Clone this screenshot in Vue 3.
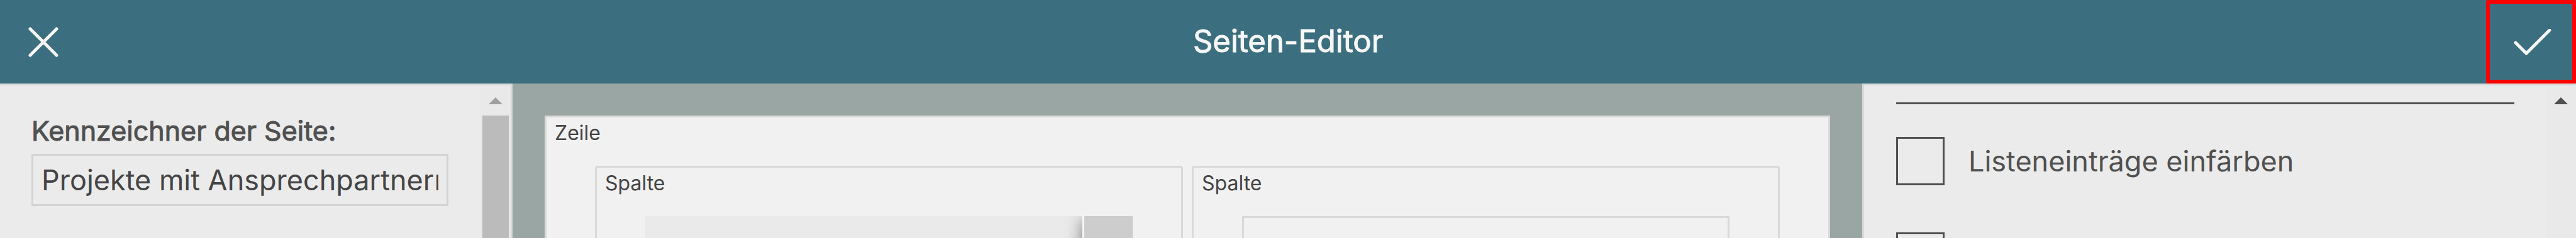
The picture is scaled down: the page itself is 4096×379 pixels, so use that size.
<script setup>
import { ref } from 'vue'

const pageName = ref('Projekte mit Ansprechpartnern')
const colorEntries = ref(false)
const nextOption = ref(false)
</script>

<template>
  <div class="editor">
    <header class="bar">
      <button class="close" type="button" aria-label="Schließen">
        <svg class="icon" viewBox="0 0 48 48" aria-hidden="true">
          <path d="M3 3L45 45M45 3L3 45" />
        </svg>
      </button>
      <h1 class="title">Seiten-Editor</h1>
      <button class="confirm" type="button" aria-label="Übernehmen">
        <svg class="tick" viewBox="0 0 60 42" aria-hidden="true">
          <path d="M3 22L20 39L57 2" />
        </svg>
      </button>
    </header>

    <main class="body">
      <aside class="panel left">
        <div class="form">
          <label class="label" for="page-name">Kennzeichner der Seite:</label>
          <input id="page-name" v-model="pageName" class="field" type="text" />
        </div>
        <div class="scroll">
          <svg class="arrow" viewBox="0 0 22 11" aria-hidden="true"><path d="M0 11L11 0L22 11Z" /></svg>
          <div class="thumb"></div>
        </div>
      </aside>

      <section class="canvas">
        <div class="row">
          <span class="tag">Zeile</span>
          <div class="cols">
            <div class="col">
              <span class="tag">Spalte</span>
              <div class="list">
                <div class="strip"></div>
              </div>
            </div>
            <div class="col">
              <span class="tag">Spalte</span>
              <div class="slot"></div>
            </div>
          </div>
        </div>
      </section>

      <aside class="panel right">
        <div class="options">
          <hr class="rule" />
          <label class="option">
            <input v-model="colorEntries" class="box" type="checkbox" />
            <span>Listeneinträge einfärben</span>
          </label>
          <label class="option">
            <input v-model="nextOption" class="box" type="checkbox" aria-label="Weitere Option" />
          </label>
        </div>
        <div class="scroll">
          <svg class="arrow dark" viewBox="0 0 22 11" aria-hidden="true"><path d="M0 11L11 0L22 11Z" /></svg>
        </div>
      </aside>
    </main>
  </div>
</template>

<style>
body {
  margin: 0;
}
</style>

<style scoped>
* {
  box-sizing: border-box;
}
.editor {
  display: flex;
  flex-direction: column;
  height: 100vh;
  overflow: hidden;
  font-family: Inter, "Liberation Sans", sans-serif;
  color: #444;
}
.bar {
  display: grid;
  grid-template-columns: 143px 1fr 143px;
  flex: none;
  height: 133px;
  background: #3b6f7f;
  color: #f7f7f7;
}
.close,
.confirm {
  display: flex;
  align-items: center;
  margin: 0;
  padding: 0;
  border: 0;
  background: none;
  color: inherit;
}
.close {
  padding-left: 45px;
}
.confirm {
  padding-left: 38px;
  border: 6px solid #f00;
  border-radius: 3px;
}
.icon {
  width: 48px;
  height: 48px;
}
.tick {
  width: 60px;
  height: 42px;
}
.icon path,
.tick path {
  fill: none;
  stroke: currentColor;
  stroke-width: 5;
  stroke-linecap: round;
  stroke-linejoin: round;
}
.title {
  margin: 0;
  font-size: 49px;
  font-weight: 400;
  -webkit-text-stroke: 1px currentColor;
  line-height: 131px;
  text-align: center;
}
.body {
  display: flex;
  flex: 1;
  min-height: 0;
}
.panel {
  display: flex;
  flex: none;
  border-top: 3px solid #d9d9d9;
  background: #ebebeb;
}
.left {
  width: 815px;
  border-right: 3px solid #d9d9d9;
}
.right {
  width: 1135px;
  border-left: 3px solid #d9d9d9;
}
.form {
  flex: 1;
  min-width: 0;
  padding: 44px 51px 0 50px;
}
.label {
  display: block;
  font-size: 43px;
  font-weight: 400;
  -webkit-text-stroke: 1px currentColor;
  line-height: 56px;
  margin-bottom: 9px;
  color: #505050;
}
.field {
  display: block;
  width: 100%;
  height: 83px;
  margin: 0;
  padding: 0 13px;
  border: 3px solid #d3d3d3;
  border-radius: 0;
  outline: 0;
  background: transparent;
  font: 400 45px Inter, "Liberation Sans", sans-serif;
  color: #444;
}
.scroll {
  display: flex;
  flex-direction: column;
  align-items: center;
  flex: none;
  width: 48px;
  padding-top: 19px;
  background: #e9e9e9;
}
.arrow {
  flex: none;
  width: 22px;
  height: 11px;
  fill: #a0a0a0;
}
.dark {
  fill: #505050;
}
.thumb {
  flex: 1;
  width: 42px;
  margin-top: 18px;
  background: #bbb;
}
.canvas {
  flex: 1;
  min-width: 0;
  padding: 51px 51px 0;
  background: #9aa6a3;
}
.row {
  height: 400px;
  padding: 0 77px;
  border: 3px solid #d9d9d9;
  background: #f1f1f1;
}
.tag {
  display: block;
  height: 77px;
  padding-top: 5px;
  margin-left: -64px;
  font-size: 32px;
  line-height: 40px;
}
.cols {
  display: grid;
  grid-template-columns: 1fr 1fr;
  gap: 14px;
}
.col {
  height: 300px;
  padding: 0 77px;
  border: 3px solid #d9d9d9;
  border-radius: 4px;
}
.list {
  display: flex;
  justify-content: flex-end;
  height: 200px;
  overflow: hidden;
  background: #eaeaea;
}
.strip {
  width: 80px;
  border-left: 3px solid #f7f7f7;
  background: #cdcdcd;
  box-shadow: 0 8px 26px rgba(0, 0, 0, 0.5);
}
.slot {
  height: 200px;
  border: 3px solid #d9d9d9;
}
.options {
  flex: 1;
  padding: 27px 50px 0 51px;
}
.rule {
  height: 3px;
  margin: 0 0 52px;
  border: 0;
  background: #505050;
}
.option {
  display: flex;
  align-items: center;
  gap: 38px;
  height: 77px;
  margin-bottom: 75px;
  font-size: 45px;
  color: #505050;
}
.box {
  appearance: none;
  flex: none;
  width: 77px;
  height: 77px;
  margin: 0;
  border: 3px solid #505050;
  border-radius: 0;
}
</style>
